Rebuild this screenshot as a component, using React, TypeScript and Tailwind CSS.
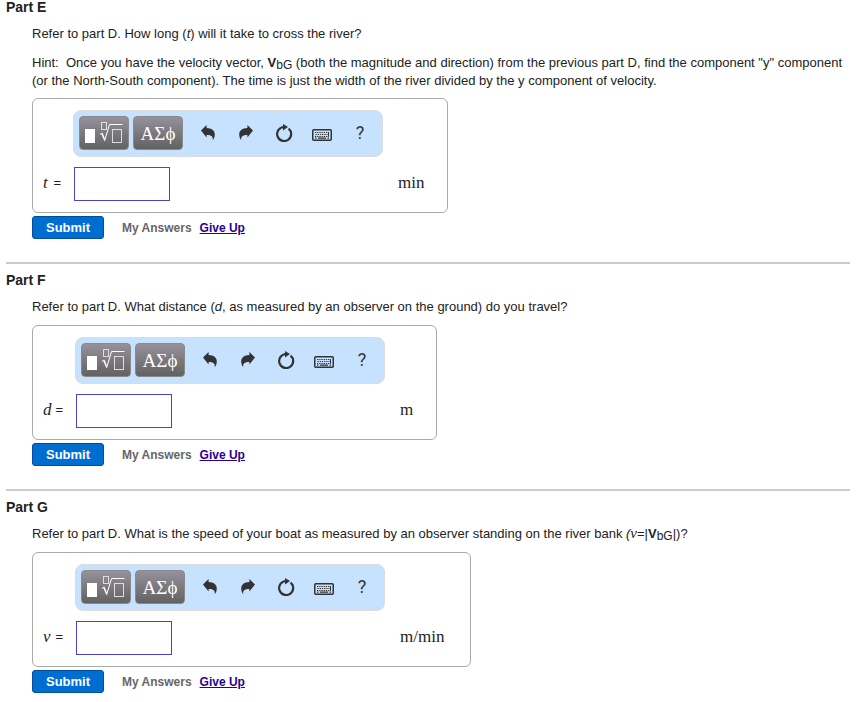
import React, { useState } from 'react';

type Part = {
  id: string;
  title: string;
  symbol: string;
  unit: string;
  boxClass: string;
  labelClass: string;
  question: React.ReactNode;
};

function VelocityVector() {
  return (
    <>
      <b>V</b>
      <sub className="-bottom-0.5 text-[12px] leading-none">bG</sub>
    </>
  );
}

const parts: Part[] = [
  {
    id: 'e',
    title: 'Part E',
    symbol: 't',
    unit: 'min',
    boxClass: 'mt-2 w-[416px]',
    labelClass: 'w-[30px]',
    question: (
      <>
        <p>
          Refer to part D. How long (<i>t</i>) will it take to cross the river?
        </p>
        <p>
          Hint:&nbsp; Once you have the velocity vector, <VelocityVector /> (both the magnitude and direction) from the
          previous part D, find the component "y" component (or the North-South component). The time is just the width
          of the river divided by the y component of velocity.
        </p>
      </>
    ),
  },
  {
    id: 'f',
    title: 'Part F',
    symbol: 'd',
    unit: 'm',
    boxClass: 'mt-[9px] w-[405px]',
    labelClass: 'w-8',
    question: (
      <p>
        Refer to part D. What distance (<i>d</i>, as measured by an observer on the ground) do you travel?
      </p>
    ),
  },
  {
    id: 'g',
    title: 'Part G',
    symbol: 'v',
    unit: 'm/min',
    boxClass: 'mt-[9px] w-[439px]',
    labelClass: 'w-8',
    question: (
      <p>
        Refer to part D. What is the speed of your boat as measured by an observer standing on the river bank{' '}
        <i>
          (<span className="font-['Liberation_Serif',serif] text-[15px] leading-none">v</span>
        </i>
        =|
        <VelocityVector />
        |)?
      </p>
    ),
  },
];

function UndoIcon() {
  return (
    <svg width="14" height="16" viewBox="0 0 14 16" fill="#333" aria-hidden="true">
      <path d="M0 5.400 5.600 0v3c5 .2 8.200 2.500 8.200 6.400 0 2.200-.8 4.300-2 5.800.4-3.600-1.200-5.200-6.200-5.200v2.400z" />
    </svg>
  );
}

function RedoIcon() {
  return (
    <svg width="14" height="16" viewBox="0 0 14 16" fill="#333" aria-hidden="true">
      <path d="M14 5.400 8.400 0v3C3.400 3.200.2 5.500.2 9.400c0 2.200.8 4.300 2 5.800-.4-3.600 1.200-5.200 6.200-5.200v2.400z" />
    </svg>
  );
}

function ResetIcon() {
  return (
    <svg width="18" height="18" viewBox="0 0 18 18" aria-hidden="true">
      <path d="M13.600 4.600A7 7 0 1 1 9 3" fill="none" stroke="#333" strokeWidth="2.200" />
      <path d="M8 0 13 3 8 6.400z" fill="#333" />
    </svg>
  );
}

function KeyboardIcon() {
  return (
    <svg className="mt-1" width="20" height="12" viewBox="0 0 20 12" fill="none" stroke="#333" aria-hidden="true">
      <rect x="0.75" y="0.75" width="18.500" height="10.500" rx="1" strokeWidth="1.500" />
      <path d="M3 3.500h14M3.500 5.500h12M3 7.500h14" strokeWidth="1" strokeDasharray="1.300 0.900" />
      <path d="M16.500 3v4" />
      <path d="M3 9.200h1.500M6 9.200h8M15.500 9.200H17" strokeWidth="1.200" />
    </svg>
  );
}

function TemplateIcon() {
  return (
    <svg width="38" height="24" viewBox="0 0 38 24" fill="none" stroke="#fff" aria-hidden="true">
      <rect x="0" y="8" width="10" height="14" fill="#fff" stroke="none" />
      <rect x="16.500" y="1.500" width="5" height="7" stroke="#ddd" />
      <path d="M15 13.500 17 12" />
      <path d="M16.800 12 19.500 18.500" strokeWidth="1.600" />
      <path d="M19.500 20 24.500 3.500H37.500" />
      <rect x="27.500" y="8.500" width="9" height="13" stroke="#ddd" />
    </svg>
  );
}

const darkButton =
  'flex h-[34px] w-[50px] items-center justify-center rounded border border-[#8a8a8a] bg-linear-to-b from-[#96919b] to-[#626262] text-white';
const toolButton = 'flex h-[34px] w-[38px] items-center justify-center';

function Toolbar() {
  return (
    <div className="flex h-[47px] w-[310px] items-start rounded-lg border border-[#dcdcdc] bg-[#c6e2ff] pt-[5px] pl-[5px]">
      <button type="button" aria-label="Templates" className={darkButton}>
        <TemplateIcon />
      </button>
      <button
        type="button"
        className={`${darkButton} ml-1 font-['Liberation_Serif','DejaVu_Serif',serif] text-[19px] leading-none`}
      >
        ΑΣϕ
      </button>
      <div className="ml-[6px] flex text-[#333]">
        <button type="button" aria-label="Undo" className={toolButton}>
          <UndoIcon />
        </button>
        <button type="button" aria-label="Redo" className={toolButton}>
          <RedoIcon />
        </button>
        <button type="button" aria-label="Reset" className={toolButton}>
          <ResetIcon />
        </button>
        <button type="button" aria-label="Keyboard shortcuts" className={toolButton}>
          <KeyboardIcon />
        </button>
        <button type="button" className={`${toolButton} font-['Roboto',sans-serif] text-[18px] leading-none`}>
          ?
        </button>
      </div>
    </div>
  );
}

function PartSection({ part }: { part: Part }) {
  const [answer, setAnswer] = useState('');
  const inputId = `answer-${part.id}`;

  return (
    <section>
      <h2 className="text-[14px] leading-[14px] font-bold text-[#222]">{part.title}</h2>
      <form className="mt-[11px] ml-[26px]" onSubmit={(e) => e.preventDefault()}>
        <div className="space-y-[11px]">{part.question}</div>
        <div className={`flex h-[115px] max-w-full rounded-md border border-[#aaa] pt-[11px] pl-[10px] ${part.boxClass}`}>
          <label
            htmlFor={inputId}
            className={`mt-[56px] flex h-[34px] shrink-0 justify-between pr-3 leading-[34px] ${part.labelClass}`}
          >
            <i className="font-['Liberation_Serif',serif] text-[17px]">{part.symbol}</i>
            <span>=</span>
          </label>
          <div className="shrink-0">
            <Toolbar />
            <input
              id={inputId}
              type="text"
              value={answer}
              onChange={(e) => setAnswer(e.target.value)}
              className="mt-[10px] ml-px block h-[34px] w-24 border border-[#4444cc] bg-white px-1"
            />
          </div>
          <span className="mt-[56px] ml-[15px] font-['Liberation_Serif',serif] text-[17px] leading-[34px]">
            {part.unit}
          </span>
        </div>
        <div className="mt-[3px] flex items-center text-[12px] font-bold">
          <button
            type="submit"
            className="h-[23px] w-[72px] rounded-[3px] border border-[#004f98] bg-[#006dd1] text-[13px] leading-none text-white"
          >
            Submit
          </button>
          <span className="ml-[18px] text-[#666]">My Answers</span>
          <a href="#" className="ml-2 text-[#2a0094] underline">
            Give Up
          </a>
        </div>
      </form>
    </section>
  );
}

export default function App() {
  return (
    <main className="bg-white px-[6px] font-['Liberation_Sans',Arial,sans-serif] text-[13px] leading-[18px] text-[#222]">
      {parts.map((part, i) => (
        <React.Fragment key={part.id}>
          {i > 0 && <hr className="mt-[23px] mb-[9px] border-t-2 border-[#ccc]" />}
          <PartSection part={part} />
        </React.Fragment>
      ))}
    </main>
  );
}
